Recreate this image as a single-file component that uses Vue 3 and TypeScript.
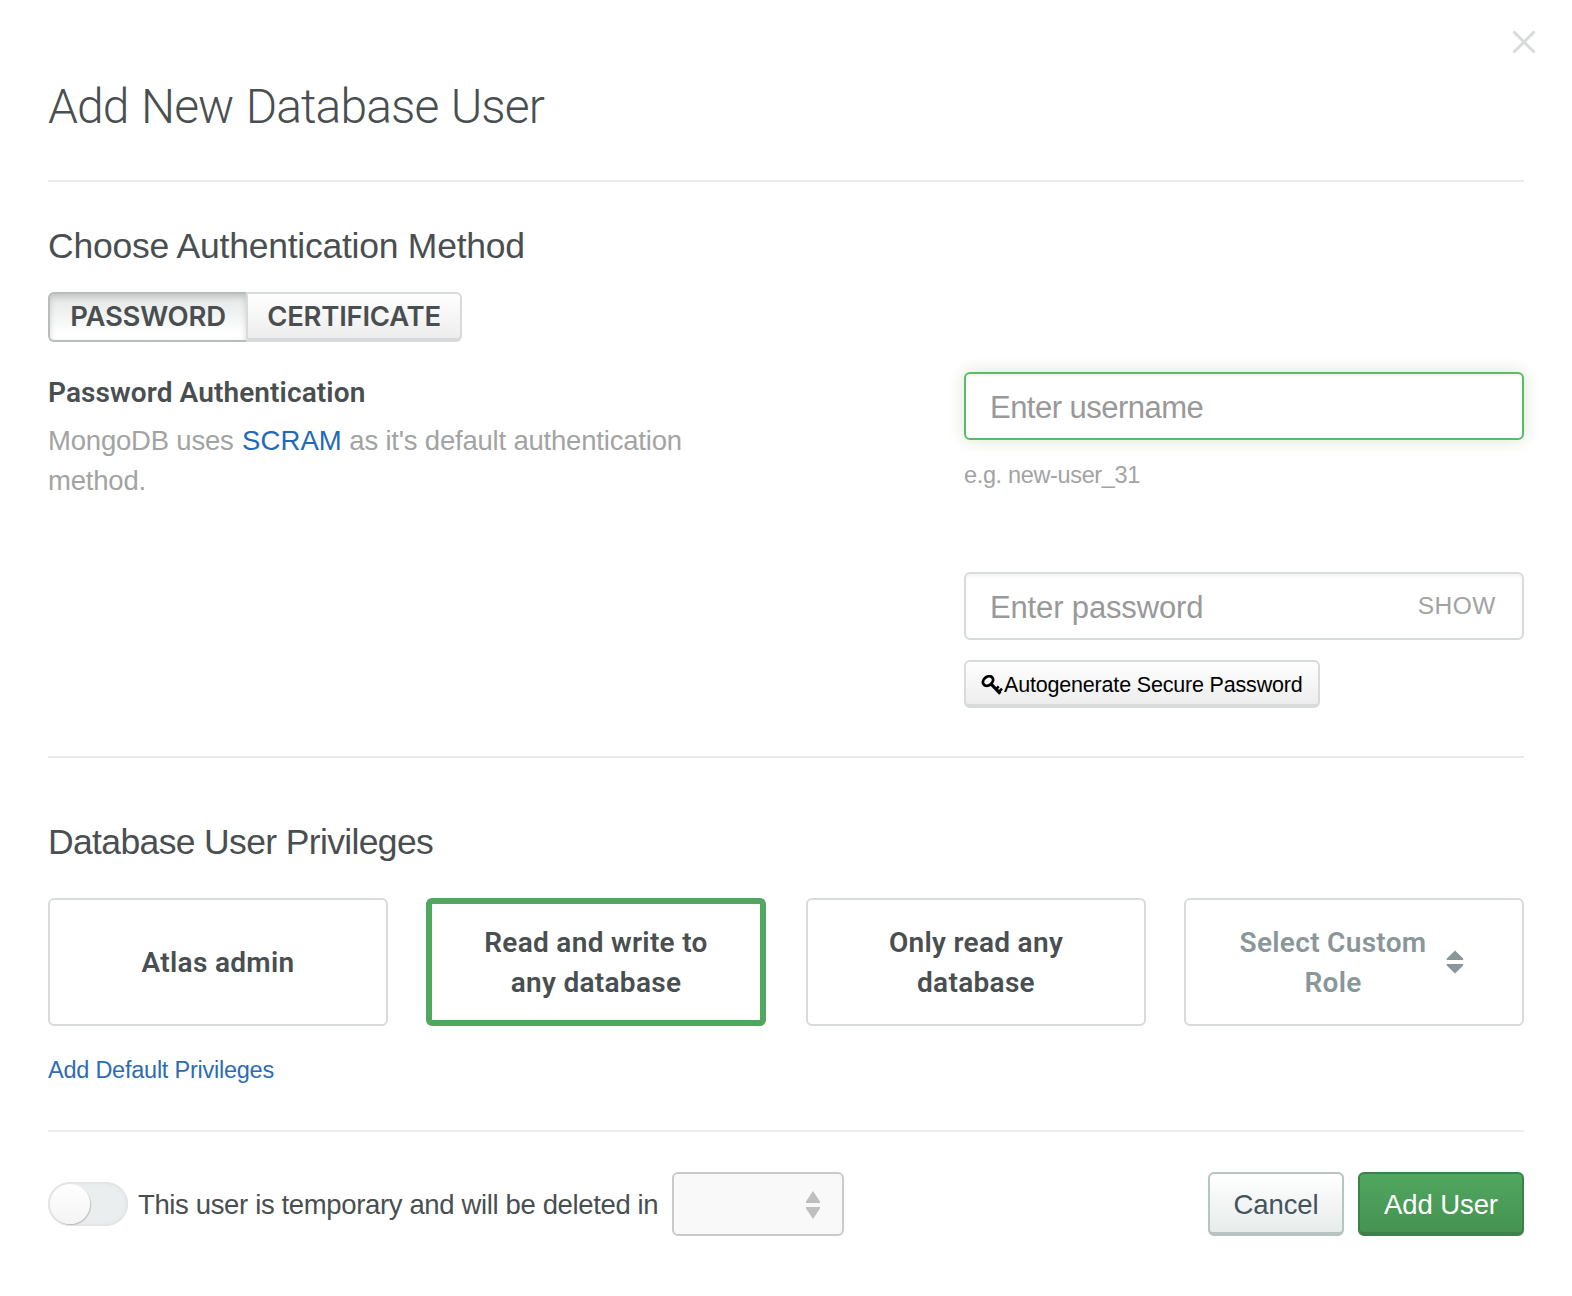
<script setup lang="ts">
import { ref } from 'vue'

type Method = 'Password' | 'Certificate'

interface Role {
  id: string
  lines: string[]
  custom?: boolean
}

const methods: Method[] = ['Password', 'Certificate']
const method = ref<Method>('Password')

const roles: Role[] = [
  { id: 'admin', lines: ['Atlas admin'] },
  { id: 'readWrite', lines: ['Read and write to', 'any database'] },
  { id: 'read', lines: ['Only read any', 'database'] },
  { id: 'custom', lines: ['Select Custom', 'Role'], custom: true },
]
const selectedRole = ref('readWrite')
const temporary = ref(false)
</script>

<template>
  <main class="dialog">
    <button class="close" aria-label="Close">
      <svg width="24" height="24" viewBox="0 0 24 24">
        <path d="M1.5 1.5 22.5 22.5M22.5 1.5 1.5 22.5" fill="none" stroke="#d8dbdb" stroke-width="3" />
      </svg>
    </button>

    <header class="header">
      <h1>Add New Database User</h1>
    </header>

    <section class="auth">
      <h2>Choose Authentication Method</h2>
      <div class="segments">
        <button
          v-for="m in methods"
          :key="m"
          class="segment"
          :class="{ active: m === method }"
          @click="method = m"
        >{{ m.toUpperCase() }}</button>
      </div>

      <div class="columns">
        <div class="info">
          <h3>Password Authentication</h3>
          <p>
            <span class="line">MongoDB uses <a>SCRAM</a> as it's default authentication</span>
            <span class="line">method.</span>
          </p>
        </div>
        <div class="fields">
          <div class="field focused">
            <input class="user" type="text" placeholder="Enter username" />
          </div>
          <p class="hint">e.g. new-user_31</p>
          <div class="field">
            <input class="pass" type="password" placeholder="Enter password" />
            <span class="show">SHOW</span>
          </div>
          <button class="generate">
            <svg width="22" height="21" viewBox="21 24 66 63" fill="none" stroke="#000">
              <ellipse cx="42" cy="42" rx="16.5" ry="12.5" transform="rotate(-38 42 42)" stroke-width="8.500" />
              <path d="M50 50 79 80" stroke-width="9.500" />
              <path d="M66 67 74 58M74 75 84 65" stroke-width="7.500" />
            </svg>
            <span>Autogenerate Secure Password</span>
          </button>
        </div>
      </div>
    </section>

    <section class="privileges">
      <h2>Database User Privileges</h2>
      <div class="roles">
        <button
          v-for="r in roles"
          :key="r.id"
          class="role"
          :class="{ selected: r.id === selectedRole, custom: r.custom }"
          @click="selectedRole = r.id"
        >
          <span class="role-text"><span v-for="l in r.lines" :key="l">{{ l }}</span></span>
          <svg v-if="r.custom" class="sort" width="18" height="24" viewBox="0 0 18 24">
            <path d="M9 .5 17.200 8.500v1.500H.8V8.500zM9 23.500 17.200 15.500v-1.500H.8v1.500z" fill="#89979b" />
          </svg>
        </button>
      </div>
      <a class="default-link">Add Default Privileges</a>
    </section>

    <footer class="footer">
      <button class="toggle" :aria-pressed="temporary" @click="temporary = !temporary">
        <span class="knob"></span>
      </button>
      <span class="temp-label">This user is temporary and will be deleted in</span>
      <div class="duration">
        <svg width="16" height="28" viewBox="0 0 16 28">
          <path d="M8 0 15 10.500v1.500H1v-1.500zM8 28 15 17.500V16H1v1.500z" fill="#bfbfbf" />
        </svg>
      </div>
      <div class="actions">
        <button class="btn cancel">Cancel</button>
        <button class="btn primary">Add User</button>
      </div>
    </footer>
  </main>
</template>

<style>
body {
  background: #fff;
}
</style>

<style scoped>
* {
  box-sizing: border-box;
}
.dialog {
  position: relative;
  width: 1572px;
  height: 1296px;
  padding: 0 48px;
  overflow: hidden;
  background: #fff;
  color: #494f51;
  font-family: "Liberation Sans", Arial, sans-serif;
}
h1, h2, h3, p {
  margin: 0;
}
button {
  margin: 0;
  padding: 0;
  font-family: inherit;
  color: inherit;
}
svg {
  display: block;
  flex: none;
}
.close {
  position: absolute;
  left: 1512px;
  top: 30px;
  border: 0;
  background: none;
}
.header {
  height: 182px;
  padding-top: 79px;
  border-bottom: 2px solid #ebebeb;
}
h1 {
  font: 300 48px/56px Roboto, sans-serif;
  letter-spacing: -0.9px;
  word-spacing: 1.5px;
}
.auth {
  height: 576px;
  padding-top: 44px;
  border-bottom: 2px solid #e7e9e9;
}
h2 {
  font-size: 35.5px;
  line-height: 40px;
  font-weight: 400;
  letter-spacing: -0.24px;
}
.segments {
  display: flex;
  width: 414px;
  height: 50px;
  margin-top: 26px;
}
.segment {
  height: 50px;
  border: 2px solid #d7dbdb;
  border-bottom: 4px solid #d7d9da;
  border-radius: 0 6px 6px 0;
  background: linear-gradient(#fff, #ededed);
  font: 600 27.5px/44px Inter, sans-serif;
  letter-spacing: -0.25px;
  width: 216px;
}
.segment.active {
  width: 198px;
  padding: 0 0 2px;
  border: 2px solid #b9bcbc;
  border-right: 0;
  border-radius: 6px 0 0 6px;
  background: linear-gradient(#e3e5e5, #fff 85%);
  box-shadow: inset 0 3px 6px rgba(0, 0, 0, 0.15);
}
.columns {
  display: flex;
  justify-content: space-between;
  margin-top: 30px;
}
.info {
  width: 680px;
  padding-top: 1px;
}
h3 {
  font: 600 28px/40px Roboto, sans-serif;
  letter-spacing: 0.1px;
}
.info p {
  margin-top: 8px;
  font-size: 27.5px;
  line-height: 40px;
  letter-spacing: -0.2px;
  color: #a3a3a3;
}
.line {
  display: block;
}
.info a {
  margin-left: 1px;
  letter-spacing: 0.1px;
  color: #2269b9;
}
.fields {
  width: 560px;
}
.field {
  display: flex;
  align-items: center;
  height: 68px;
  padding: 0 26px 0 24px;
  border: 2px solid #d7dbdb;
  border-radius: 6px;
  background: #fff;
  box-shadow: inset 0 2px 3px rgba(0, 0, 0, 0.06);
}
.field.focused {
  border-color: #57bd68;
  box-shadow: inset 0 2px 2px rgba(0, 0, 0, 0.05), 0 0 16px rgba(90, 130, 30, 0.22);
}
input {
  flex: 1;
  min-width: 0;
  height: 64px;
  padding: 4px 0 0;
  border: 0;
  outline: 0;
  background: none;
  font: 31px "Liberation Sans", Arial, sans-serif;
}
input::placeholder {
  color: #999;
}
.user {
  letter-spacing: -0.53px;
}
.pass {
  letter-spacing: -0.15px;
}
.hint {
  margin: 17px 0 79px;
  font-size: 23.5px;
  line-height: 36px;
  letter-spacing: -0.35px;
  color: #a3a3a3;
}
.show {
  font-size: 24.5px;
  line-height: 28px;
  letter-spacing: 0.5px;
  color: #a3a3a3;
}
.generate {
  display: flex;
  align-items: center;
  gap: 1px;
  width: 356px;
  height: 48px;
  margin-top: 20px;
  padding: 5px 0 0 15px;
  border: 2px solid #d7dbdb;
  border-bottom-width: 4px;
  border-radius: 6px;
  background: linear-gradient(#fff, #ededed);
  color: #000;
  font-size: 21.5px;
  letter-spacing: -0.18px;
  white-space: nowrap;
}
.privileges {
  height: 374px;
  padding-top: 64px;
  border-bottom: 2px solid #ededed;
}
.privileges h2 {
  letter-spacing: -0.64px;
}
.roles {
  display: flex;
  margin-top: 36px;
}
.role {
  display: flex;
  align-items: center;
  justify-content: center;
  width: 340px;
  height: 128px;
  margin-right: 38px;
  padding-top: 2px;
  border: 2px solid #d7dbdb;
  border-radius: 6px;
  background: #fff;
  font: 600 28px/40px Roboto, sans-serif;
  letter-spacing: 0.3px;
}
.role.selected {
  margin-right: 40px;
  border: 6px solid #50a760;
}
.role.custom {
  margin-right: 0;
  padding-right: 4px;
  color: #89979b;
}
.role-text {
  display: flex;
  flex-direction: column;
  align-items: center;
}
.sort {
  margin: -2px 0 0 20px;
}
.default-link {
  display: block;
  width: max-content;
  margin-top: 28px;
  font-size: 23.5px;
  line-height: 32px;
  letter-spacing: -0.24px;
  color: #2d6cb5;
}
.footer {
  display: flex;
  align-items: center;
  height: 64px;
  margin-top: 40px;
}
.toggle {
  width: 80px;
  height: 44px;
  padding: 2px;
  border: 0;
  border-radius: 22px;
  background: #ebeeee;
  box-shadow: inset 0 0 8px rgba(0, 0, 0, 0.04), inset 0 0 0 2px #e7e9e9;
}
.knob {
  display: block;
  width: 40px;
  height: 40px;
  border-radius: 50%;
  background: linear-gradient(#fff, #f4f4f4);
  box-shadow: 1px 1px 1px rgba(0, 0, 0, 0.2);
}
.temp-label {
  width: 534px;
  margin-left: 10px;
  padding-top: 2px;
  font-size: 27.5px;
  letter-spacing: -0.36px;
  white-space: nowrap;
}
.duration {
  display: flex;
  align-items: center;
  justify-content: flex-end;
  width: 172px;
  height: 64px;
  padding: 2px 21px 0 0;
  border: 2px solid #c9caca;
  border-radius: 6px;
  background: #f9f9f9;
}
.actions {
  display: flex;
  gap: 14px;
  margin-left: auto;
}
.btn {
  height: 64px;
  padding: 4px 0 0;
  border: 2px solid;
  border-bottom-width: 4px;
  border-radius: 6px;
  font-size: 27.5px;
  letter-spacing: -0.1px;
}
.cancel {
  width: 136px;
  border-color: #b8c4c2;
  background: linear-gradient(#fff, #e7eceb);
  color: #44535c;
}
.primary {
  width: 166px;
  border-color: #3d8049;
  background: linear-gradient(#50a75f, #469252);
  color: #fff;
}
</style>
